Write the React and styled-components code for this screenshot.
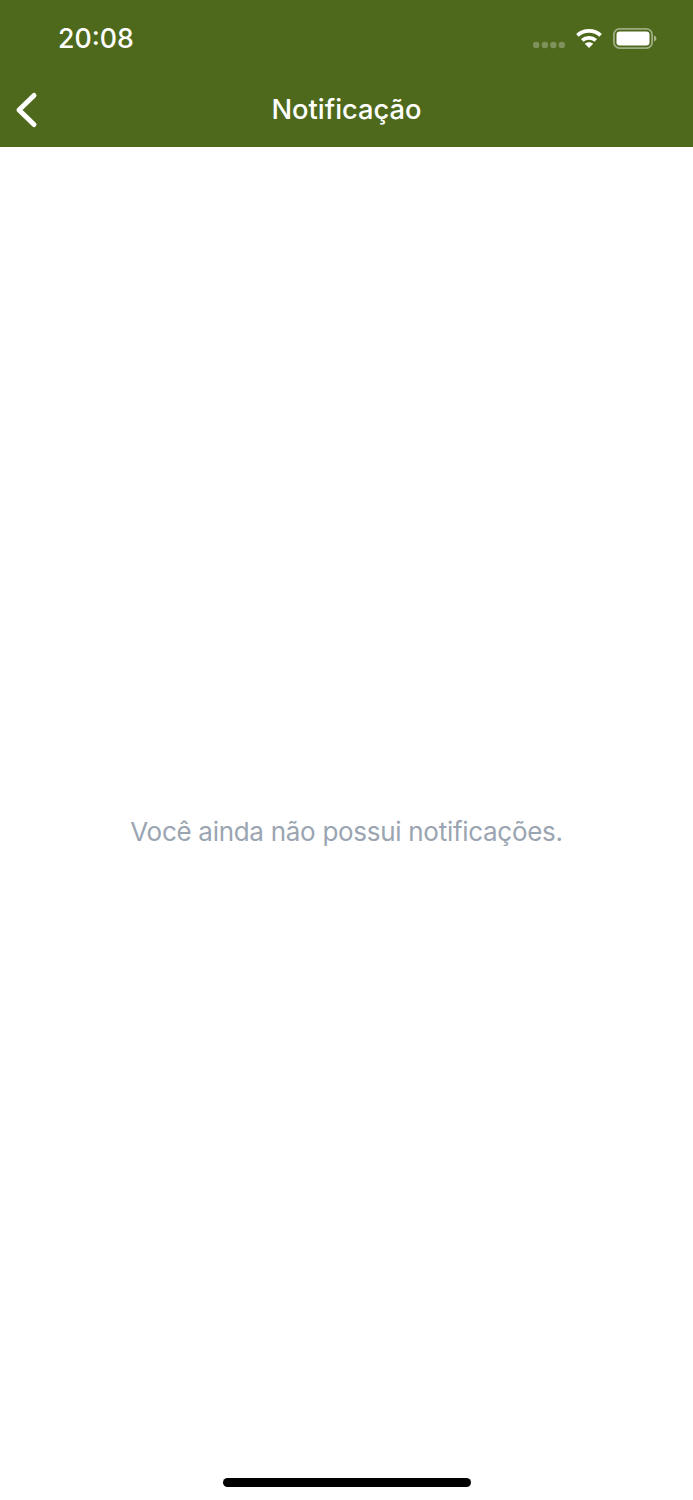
import React from "react";
import styled, { createGlobalStyle } from "styled-components";

const Global = createGlobalStyle`
  html, body { margin: 0; padding: 0; background: #fff; }
  * { box-sizing: border-box; }
`;

const Screen = styled.div`
  width: 693px;
  height: 1500px;
  display: flex;
  flex-direction: column;
  background: #fff;
  font-family: Inter, "Liberation Sans", sans-serif;
  overflow: hidden;
`;

const Header = styled.header`
  height: 147px;
  background: #4f691c;
  display: flex;
  flex-direction: column;
  color: #fff;
`;

const StatusBar = styled.div`
  height: 76px;
  display: flex;
  align-items: center;
  justify-content: space-between;
  padding: 0 36px 0 58px;
`;

const Time = styled.span`
  font-size: 26.7px;
  font-weight: 500;
`;

const StatusIcons = styled.div`
  display: flex;
  align-items: center;
  gap: 10px;
`;

const CellularSlot = styled.span`
  display: flex;
  margin-top: 13px;
`;

const NavBar = styled.nav`
  height: 71px;
  display: grid;
  grid-template-columns: 1fr auto 1fr;
  align-items: center;
  padding: 0 14px 4px;
`;

const BackButton = styled.button`
  width: 26px;
  height: 38px;
  padding: 0;
  border: 0;
  background: none;
  display: flex;
`;

const Title = styled.h1`
  margin: 0;
  font-size: 27.3px;
  font-weight: 550;
  line-height: 34px;
`;

const Body = styled.main`
  flex: 1;
  display: flex;
  align-items: center;
  justify-content: center;
  padding-top: 52px;
`;

const EmptyText = styled.p`
  margin: 0;
  font-size: 26px;
  letter-spacing: -0.29px;
  line-height: 34px;
  font-weight: 400;
  color: #9aa5b1;
`;

const HomeArea = styled.div`
  height: 35px;
  display: flex;
  justify-content: center;
  padding-top: 13px;
`;

const HomeBar = styled.div`
  width: 248px;
  height: 9px;
  border-radius: 5px;
  background: #000;
`;

const Cellular = () => (
  <svg width="32" height="8" viewBox="0 0 32 8" fill="#fff" fillOpacity="0.28">
    <circle cx="3.2" cy="4" r="3.2" />
    <circle cx="11.9" cy="4" r="3.2" />
    <circle cx="20.4" cy="4" r="3.2" />
    <circle cx="28.8" cy="4" r="3.2" />
  </svg>
);

const Wifi = () => (
  <svg width="28" height="20" viewBox="0 0 28 20" fill="none" stroke="#fff" strokeWidth="3.8">
    <path d="M2.4 7.4C8.8 1.4 19.2 1.4 25.6 7.4" />
    <path d="M7.2 12.4C11 9 17 9 20.8 12.4" />
    <path d="M14 20L9.8 15.8C12.2 13.8 15.8 13.8 18.2 15.8Z" fill="#fff" stroke="none" />
  </svg>
);

const Battery = () => (
  <svg width="44" height="21" viewBox="0 0 44 21">
    <rect x="0.9" y="0.9" width="38.2" height="19.2" rx="5.6" fill="none" stroke="#fff" strokeOpacity="0.45" strokeWidth="1.8" />
    <rect x="3.5" y="3.5" width="33" height="14" rx="3.2" fill="#fff" />
    <path d="M41 7.5c1.4.4 2.4 1.6 2.4 3s-1 2.6-2.4 3z" fill="#fff" fillOpacity="0.5" />
  </svg>
);

const Chevron = () => (
  <svg width="26" height="38" viewBox="0 0 26 38" fill="none" stroke="#fff" strokeWidth="5" strokeLinecap="round" strokeLinejoin="round">
    <path d="M20 4.5L5 19L20 33.5" />
  </svg>
);

export default function App() {
  return (
    <Screen>
      <Global />
      <Header>
        <StatusBar>
          <Time>20:08</Time>
          <StatusIcons>
            <CellularSlot>
              <Cellular />
            </CellularSlot>
            <Wifi />
            <Battery />
          </StatusIcons>
        </StatusBar>
        <NavBar>
          <BackButton aria-label="Voltar">
            <Chevron />
          </BackButton>
          <Title>Notificação</Title>
        </NavBar>
      </Header>
      <Body>
        <EmptyText>Você ainda não possui notificações.</EmptyText>
      </Body>
      <HomeArea>
        <HomeBar />
      </HomeArea>
    </Screen>
  );
}
